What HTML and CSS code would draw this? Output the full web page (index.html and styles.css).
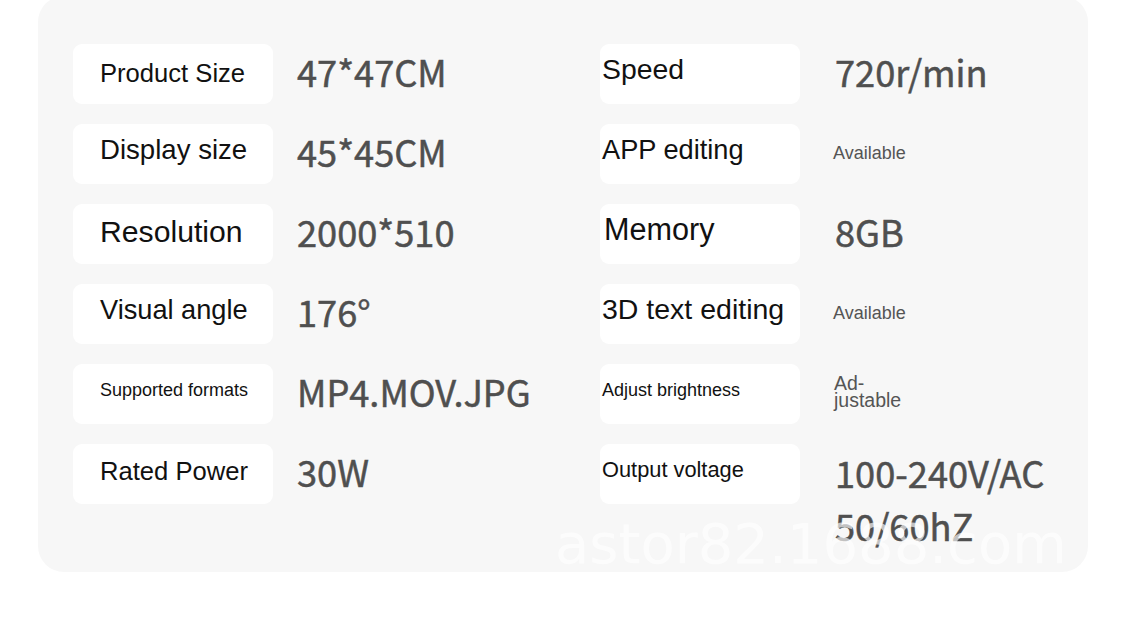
FILE: index.html
```html
<!DOCTYPE html>
<html>
<head>
<meta charset="utf-8">
<link rel="stylesheet" href="styles.css">
</head>
<body>
<div class="panel">
  <div class="grid">
    <div class="label indent up0 s26">Product Size</div>
    <div class="value big">47*47CM</div>
    <div class="label tight s28">Speed</div>
    <div class="value big right">720r/min</div>

    <div class="label indent s27b">Display size</div>
    <div class="value big">45*45CM</div>
    <div class="label tight s27">APP editing</div>
    <div class="value small right">Available</div>

    <div class="label indent up1 s30">Resolution</div>
    <div class="value big">2000*510</div>
    <div class="label tight shift s30b">Memory</div>
    <div class="value big right">8GB</div>

    <div class="label indent s27">Visual angle</div>
    <div class="value big">176°</div>
    <div class="label tight s285">3D text editing</div>
    <div class="value small right">Available</div>

    <div class="label indent s18b">Supported formats</div>
    <div class="value big">MP4.MOV.JPG</div>
    <div class="label tight s18">Adjust brightness</div>
    <div class="value small right hyph">Ad-<br>justable</div>

    <div class="label indent up2 s26">Rated Power</div>
    <div class="value big">30W</div>
    <div class="label tight s22">Output voltage</div>
    <div class="value big right multi">100-240V/AC<br>50/60hZ</div>
  </div>
  <div class="watermark">astor82.1688.com</div>
</div>
</body>
</html>
```

FILE: styles.css
```css
html, body {
  margin: 0;
  padding: 0;
  background: #ffffff;
}
body {
  width: 1125px;
  height: 626px;
  overflow: hidden;
}
.panel {
  position: relative;
  margin: -4px 0 0 38px;
  width: 1050px;
  height: 576px;
  background: #f7f7f7;
  border-radius: 26px;
  box-sizing: border-box;
  padding: 48px 0 0 35px;
  overflow: hidden;
}
.grid {
  display: grid;
  grid-template-columns: 200px 327px 200px 1fr;
  grid-auto-rows: 60px;
  row-gap: 20px;
}
.label {
  background: #ffffff;
  border-radius: 9px;
  display: flex;
  align-items: center;
  font-family: "Liberation Sans", Arial, sans-serif;
  color: #111;
  line-height: 1;
  white-space: nowrap;
  box-sizing: border-box;
  padding-bottom: 9px;
}
.label.indent { padding-left: 27px; }
.label.tight { padding-left: 2px; }
.label.shift { padding-left: 4px; }
.label.up0 { padding-bottom: 0; }
.label.up1 { padding-bottom: 3px; }
.label.up2 { padding-bottom: 4px; }
.s26 { font-size: 25.6px; }
.s27 { font-size: 27.2px; }
.s27b { font-size: 27.6px; }
.s28 { font-size: 28.4px; }
.s285 { font-size: 28.5px; }
.s30 { font-size: 30.2px; }
.s30b { font-size: 30.6px; }
.s18b { font-size: 18px; }
.s18 { font-size: 18px; }
.s22 { font-size: 21.8px; }

.value {
  display: flex;
  align-items: center;
  padding-left: 24px;
  color: #4f4f4f;
  white-space: nowrap;
  box-sizing: border-box;
}
.value.right { padding-left: 35px; }
.value.big {
  font-family: "Noto Sans CJK SC", "Noto Sans", sans-serif;
  font-size: 36.2px;
  font-weight: 400;
  -webkit-text-stroke: 0.5px #4f4f4f;
  line-height: 1;
  padding-bottom: 5px;
}
.value.small {
  font-family: "Liberation Sans", Arial, sans-serif;
  font-size: 18px;
  line-height: 1;
  color: #555;
  padding-bottom: 2px;
  padding-left: 33px;
}
.value.hyph {
  font-size: 19.5px;
  line-height: 17px;
  padding-left: 34px;
  padding-bottom: 4px;
}
.value.multi {
  align-items: flex-start;
  line-height: 53px;
  padding-top: 2px;
  padding-bottom: 0;
}
.watermark {
  position: absolute;
  left: 517px;
  top: 520px;
  font-family: "DejaVu Sans", sans-serif;
  font-size: 56px;
  line-height: 1;
  color: rgba(255, 255, 255, 0.65);
  white-space: nowrap;
  pointer-events: none;
}
```
